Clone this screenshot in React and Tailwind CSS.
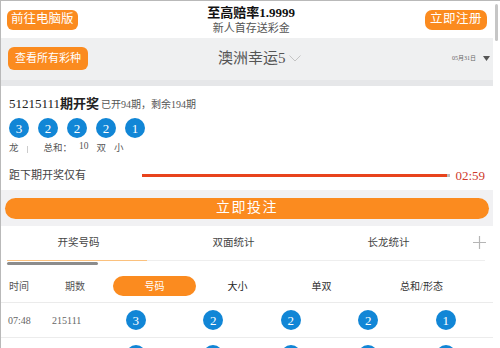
const balls = [3, 2, 2, 2, 1]

function Ball({ n, className = '' }) {
  return (
    <span
      className={`flex h-[20px] w-[20px] items-center justify-center rounded-full bg-[#1186d6] text-[13px] leading-none text-white ${className}`}
    >
      {n}
    </span>
  )
}

function DrawRow({ time, issue, empty }) {
  return (
    <div className="grid h-[35px] shrink-0 grid-cols-[45px_51px_repeat(5,77.5px)] items-center border-b border-[#ececec]">
      <span className="pl-[7px] text-[10px] text-[#666]">{time}</span>
      <span className="pl-[6px] text-[10px] text-[#666]">{issue}</span>
      {balls.map((n, i) => (
        <div key={i} className="flex justify-center">
          <Ball n={empty ? '' : n} />
        </div>
      ))}
    </div>
  )
}

export default function App() {
  return (
    <div
      className="flex h-[348px] w-[500px] overflow-hidden border-l border-t border-[#b9b9b9] bg-white"
      style={{ fontFamily: '"Liberation Serif", "Noto Sans CJK SC", serif' }}
    >
      <main className="flex w-[492px] shrink-0 flex-col">
        {/* header */}
        <header className="flex h-[37px] shrink-0 items-center px-[6px]">
          <button className="h-[20px] rounded-[6px] bg-[#fb8b1f] px-[4px] text-[12.5px] leading-none text-white">
            前往电脑版
          </button>
          <div className="flex flex-1 flex-col items-center leading-none">
            <span className="text-[13px] font-bold text-[#111]">至高赔率1.9999</span>
            <span className="mt-[4px] text-[11px] text-[#555]">新人首存送彩金</span>
          </div>
          <button className="h-[20px] rounded-[7px] bg-[#fb8b1f] px-[5px] text-[12.5px] leading-none tracking-[0.5px] text-white">
            立即注册
          </button>
        </header>

        {/* lottery bar */}
        <div className="flex h-[48px] shrink-0 flex-col bg-[#eff0f1]">
          <div className="flex h-[41px] items-center pl-[7px] pr-[3px]">
            <button className="h-[23px] rounded-[6px] bg-[#fb8b1f] px-[7px] text-[11px] leading-none text-white">
              查看所有彩种
            </button>
            <div className="ml-[130px] flex items-center text-[15px] text-[#555]">
              澳洲幸运5
              <svg className="ml-[3px]" width="12" height="7" viewBox="0 0 12 7">
                <path d="M0.5 0.5 L6 6 L11.5 0.5" fill="none" stroke="#c4c4c4" strokeWidth="1" />
              </svg>
            </div>
            <div className="ml-auto flex items-center">
              <span className="text-[6px] text-[#666]">05月31日</span>
              <svg className="ml-[7px]" width="7" height="5" viewBox="0 0 7 5">
                <path d="M0 0 H7 L3.5 5 Z" fill="#555" />
              </svg>
            </div>
          </div>
          <div className="mt-auto h-[6px] bg-[#e6e7e9]" />
        </div>

        {/* draw info */}
        <section className="flex h-[104px] shrink-0 flex-col px-[8px] pt-[11px]">
          <div className="flex h-[13px] items-baseline leading-none">
            <span className="text-[13px] text-[#222]">51215111</span>
            <span className="text-[13px] font-bold text-[#222]">期开奖</span>
            <span className="ml-[2px] text-[10px] text-[#555]">已开94期，剩余194期</span>
          </div>
          <div className="mt-[8px] flex gap-[9px]">
            {balls.map((n, i) => (
              <Ball key={i} n={n} />
            ))}
          </div>
          <div className="mt-[6px] flex h-[10px] items-center text-[9.5px] leading-none text-[#555]">
            <span>龙</span>
            <span className="ml-[8px] h-[7px] w-px bg-[#ccc]" />
            <span className="ml-[16px]">总和：</span>
            <span className="ml-[7px] -translate-y-[2px]">10</span>
            <span className="ml-[8px]">双</span>
            <span className="ml-[8px]">小</span>
          </div>
          <div className="mt-[15px] flex h-[13px] items-center leading-none">
            <span className="text-[11px] text-[#444]">距下期开奖仅有</span>
            <div className="ml-[56px] flex flex-1 items-center">
              <div className="h-[3px] flex-1 bg-[#e8431c]" />
              <div className="h-[3px] w-[3px] bg-[#bbb]" />
            </div>
            <span className="ml-[5px] text-[13px] text-[#cf3a2c]">02:59</span>
          </div>
        </section>

        {/* bet button */}
        <div className="flex h-[36px] shrink-0 items-center bg-[#f1f1f3] px-[4px]">
          <button className="h-[21px] w-full rounded-full bg-[#fb8b1f] text-[14px] leading-none tracking-[1.5px] text-white">
            立即投注
          </button>
        </div>

        {/* tabs */}
        <nav className="flex h-[33px] shrink-0 items-center text-[10.5px] text-[#444]">
          <span className="w-[155px] text-center">开奖号码</span>
          <span className="w-[155px] text-center">双面统计</span>
          <span className="w-[155px] text-center">长龙统计</span>
          <svg className="ml-[7px]" width="13" height="13" viewBox="0 0 13 13">
            <path d="M6.5 0 V13 M0 6.5 H13" stroke="#b5b5b5" strokeWidth="1.2" />
          </svg>
        </nav>
        <div className="flex h-[11px] shrink-0 items-start pl-[6px] pr-[8px] pt-[1px]">
          <div className="flex flex-1 flex-col">
            <div className="flex h-px">
              <div className="w-[140px] bg-[#fbc17e]" />
              <div className="flex-1 bg-[#eeeeee]" />
            </div>
            <div className="mt-[1px] h-[3px] w-[91px] rounded-full bg-[#8c8c8c]" />
          </div>
        </div>

        {/* table header */}
        <div className="flex h-[33px] shrink-0 items-center border-b border-[#ebebeb] text-[10px]">
          <span className="w-[36px] text-center text-[#555]">时间</span>
          <span className="w-[76px] text-center text-[#555]">期数</span>
          <span className="flex h-[20px] w-[83px] items-center justify-center rounded-full bg-[#fb8b1f] text-white">
            号码
          </span>
          <span className="w-[83px] text-center text-[#222]">大小</span>
          <span className="w-[85px] text-center text-[#333]">单双</span>
          <span className="w-[115px] text-center text-[#333]">总和/形态</span>
        </div>

        <DrawRow time="07:48" issue="215111" />
        <DrawRow time="" issue="" empty />
      </main>

      {/* vertical scrollbar */}
      <div className="flex w-[7px] shrink-0 flex-col items-center bg-white pt-[3px]">
        <div className="h-[37px] w-[3px] rounded-full bg-[#c6c6c6]" />
      </div>
    </div>
  )
}
